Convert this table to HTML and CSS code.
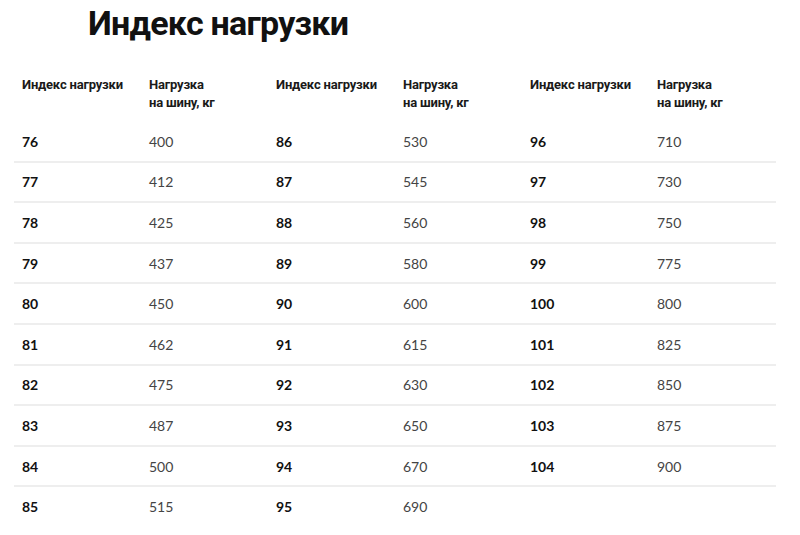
FILE: index.html
```html
<!DOCTYPE html>
<html lang="ru">
<head>
<meta charset="utf-8">
<link rel="stylesheet" href="styles.css">
</head>
<body>
<h1 class="title">Индекс нагрузки</h1>
<table class="load">
<thead>
<tr>
<th>Индекс нагрузки</th><th>Нагрузка<br>на шину, кг</th>
<th>Индекс нагрузки</th><th>Нагрузка<br>на шину, кг</th>
<th>Индекс нагрузки</th><th>Нагрузка<br>на шину, кг</th>
</tr>
</thead>
<tbody>
<tr><td class="i">76</td><td>400</td><td class="i">86</td><td>530</td><td class="i">96</td><td>710</td></tr>
<tr><td class="i">77</td><td>412</td><td class="i">87</td><td>545</td><td class="i">97</td><td>730</td></tr>
<tr><td class="i">78</td><td>425</td><td class="i">88</td><td>560</td><td class="i">98</td><td>750</td></tr>
<tr><td class="i">79</td><td>437</td><td class="i">89</td><td>580</td><td class="i">99</td><td>775</td></tr>
<tr><td class="i">80</td><td>450</td><td class="i">90</td><td>600</td><td class="i">100</td><td>800</td></tr>
<tr><td class="i">81</td><td>462</td><td class="i">91</td><td>615</td><td class="i">101</td><td>825</td></tr>
<tr><td class="i">82</td><td>475</td><td class="i">92</td><td>630</td><td class="i">102</td><td>850</td></tr>
<tr><td class="i">83</td><td>487</td><td class="i">93</td><td>650</td><td class="i">103</td><td>875</td></tr>
<tr><td class="i">84</td><td>500</td><td class="i">94</td><td>670</td><td class="i">104</td><td>900</td></tr>
<tr class="last"><td class="i">85</td><td>515</td><td class="i">95</td><td>690</td><td></td><td></td></tr>
</tbody>
</table>
</body>
</html>
```
FILE: styles.css
```css
html, body {
  margin: 0;
  padding: 0;
  background: #fff;
}
body {
  padding: 0 14px;
  font-family: Lato, "Open Sans", sans-serif;
  color: #222;
}
.title {
  margin: 0;
  padding: 0 0 0 74px;
  font-family: Roboto, "Open Sans", sans-serif;
  font-weight: 700;
  font-size: 34px;
  line-height: 46px;
  letter-spacing: -0.75px;
  color: #111;
}
.load {
  border-collapse: collapse;
  width: 762px;
  margin-top: 30px;
  table-layout: fixed;
}
.load th {
  text-align: left;
  vertical-align: top;
  font-family: Roboto, "Open Sans", sans-serif;
  font-weight: 700;
  font-size: 13px;
  line-height: 18px;
  letter-spacing: -0.2px;
  color: #1a1a1a;
  padding: 0 0 10px 8px;
}
.load td {
  height: 38.6px;
  padding: 0 0 0 8px;
  font-size: 14px;
  color: #444;
  border-bottom: 2px solid #eee;
  vertical-align: middle;
}
.load td.i {
  font-weight: 700;
  color: #111;
}
.load tr.last td {
  border-bottom: none;
}
```
